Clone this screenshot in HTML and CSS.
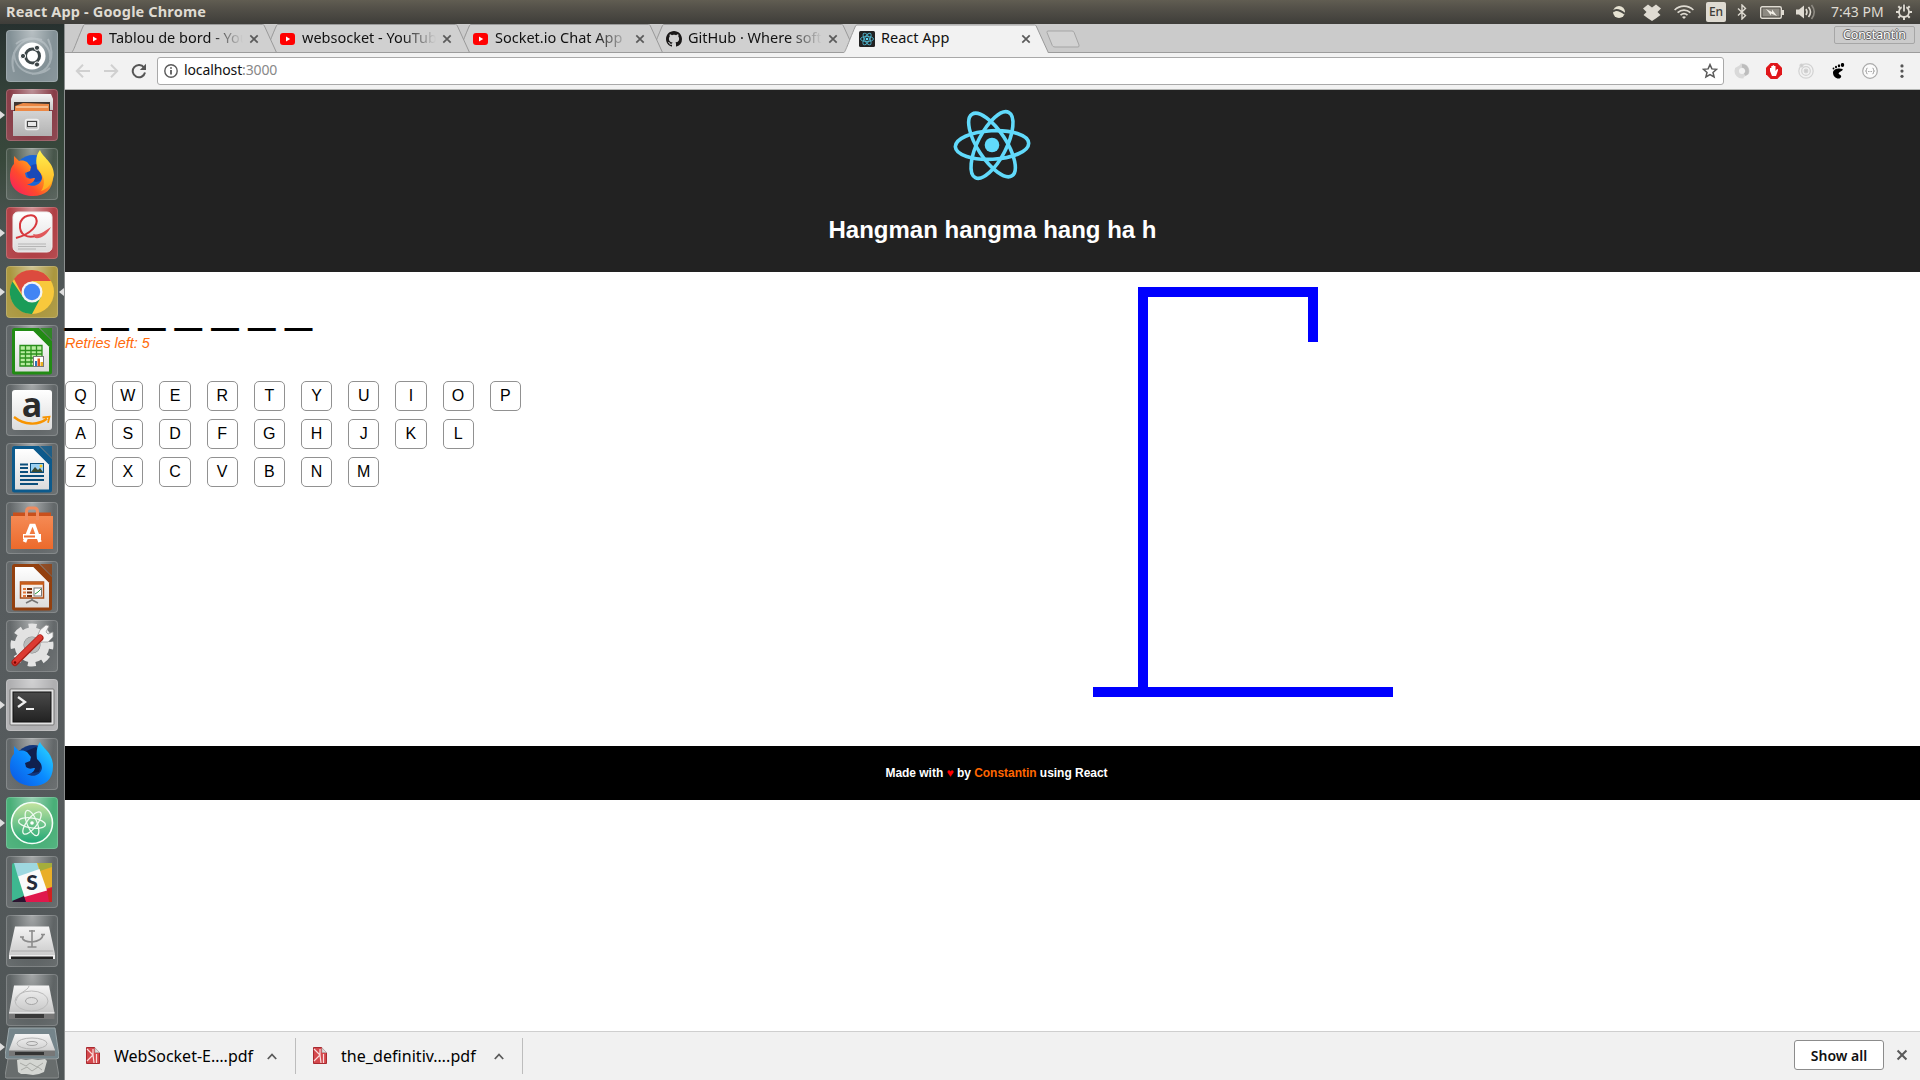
FILE: index.html
```html
<!DOCTYPE html>
<html lang="en">
<head>
<meta charset="utf-8">
<title>React App</title>
<link rel="stylesheet" href="styles.css">
</head>
<body>
<svg class="defs" width="0" height="0" aria-hidden="true">
  <defs>
    <linearGradient id="silver" x1="0" y1="0" x2="0" y2="1"><stop offset="0" stop-color="#f4f4f4"/><stop offset="1" stop-color="#c6c6c6"/></linearGradient>
    <linearGradient id="paper" x1="0" y1="0" x2="0" y2="1"><stop offset="0" stop-color="#fff"/><stop offset="1" stop-color="#dcdcdc"/></linearGradient>
    <linearGradient id="fox" x1="1" y1="0" x2="0" y2="1"><stop offset="0" stop-color="#fff44f"/><stop offset=".35" stop-color="#ffa81a"/><stop offset=".65" stop-color="#ff4a2c"/><stop offset="1" stop-color="#f5156c"/></linearGradient>
    <linearGradient id="bluefox" x1="1" y1="0" x2="0" y2="1"><stop offset="0" stop-color="#2fe0ff"/><stop offset=".5" stop-color="#0a8bff"/><stop offset="1" stop-color="#0b52e0"/></linearGradient>
    <linearGradient id="foxtail" x1="0" y1="0" x2="0" y2="1"><stop offset="0" stop-color="#fff250"/><stop offset="1" stop-color="#ffac1c"/></linearGradient>
    <linearGradient id="bag" x1="0" y1="0" x2="0" y2="1"><stop offset="0" stop-color="#f58a54"/><stop offset="1" stop-color="#ec6a2c"/></linearGradient>
    <linearGradient id="atomg" x1="0" y1="0" x2="0" y2="1"><stop offset="0" stop-color="#c5e4a0"/><stop offset="1" stop-color="#1ea675"/></linearGradient>
    <linearGradient id="screen" x1="0" y1="0" x2="0" y2="1"><stop offset="0" stop-color="#4a4a4a"/><stop offset="1" stop-color="#222"/></linearGradient>
    <symbol id="foxshape" viewBox="0 0 52 52"><path d="M4 29C4 21 6 18 8 16V8l5 5c3-1 6 0 8 1l4 5-1 4-5 2 1 4c4 3 6 1 9 1-1 4-4 6-8 6 6 4 14 1 15-6 0-4-3-7-5-9-1-7 0-13 3-17 2 6 13 10 13 24S39 48 27 48 4 41 4 29z"/></symbol>
    <symbol id="yt" viewBox="0 0 15 12"><rect width="15" height="12" rx="3" fill="#f00"/><path d="M6 3.500v5L10.200 6z" fill="#fff"/></symbol>
    <symbol id="close" viewBox="0 0 10 10"><path d="M1.300 1.300l7.400 7.400M8.700 1.300L1.300 8.700" stroke="#5a5a5a" stroke-width="1.700" fill="none"/></symbol>
    <symbol id="tabshape" viewBox="0 0 206 28"><path d="M.5 28.500C3 26.500 4 21 12.500 1.500 13 .8 13.300.5 14 .5H191.500c1 0 1.300.3 1.700 1L205.500 28.500"/></symbol>
    <symbol id="chev" viewBox="0 0 10 7"><path d="M.8 6L5 1.500 9.200 6" fill="none" stroke="#5a5a5a" stroke-width="1.800"/></symbol>
    <symbol id="pdf" viewBox="0 0 14 17"><path d="M.5.500h9l4 4v12H.5z" fill="#d4484c" stroke="#a82a30"/><path d="M8.500 0H14v6z" fill="#f1f1f1"/><path d="M9 1v4.500h4.500z" fill="#ddd" stroke="#aaa" stroke-width=".6"/><path d="M1 2l6 6-6 6M7 8V2M7 8l1 8M10.500 7v9" stroke="#f8dcdc" stroke-width="1.200" fill="none"/></symbol>
    <symbol id="office" viewBox="0 0 52 52"><path d="M9 3H33L46 16V47a2.500 2.500 0 0 1-2.500 2.500H8.500A2.500 2.500 0 0 1 6 47V5.500A2.500 2.500 0 0 1 9 3z"/><path d="M34 3h12v12z" opacity=".8"/><path d="M9 6H27.500L43 21.500V46.500H9z" fill="url(#paper)"/><path d="M27.500 6L43 21.500V18L31 6z" opacity=".8"/></symbol>
    <symbol id="disk" viewBox="0 0 52 52"><path d="M8 11.500H43L48.500 39H3z" fill="url(#silver)"/><path d="M3 39H48.500V45H3z" fill="#777"/><path d="M9 40H38V44H9z" fill="#383838"/><path d="M3 39H48.500" stroke="#fff"/><ellipse cx="25.500" cy="27" rx="16.500" ry="10" fill="none" stroke="#bbb"/><ellipse cx="25.500" cy="27" rx="6" ry="3.500" fill="#ddd" stroke="#a4a4a4"/><path d="M23 12c-1 5-11 6-13 15" stroke="#bbb" fill="none"/></symbol>
  </defs>
</svg>

<header class="panel">
  <div class="panel-title">React App - Google Chrome</div>
  <div class="tray">
    <svg class="t-app" viewBox="0 0 14 14"><circle cx="7" cy="7" r="6" fill="#e6e2d2"/><path d="M1 6.500C4 3.500 8 5 12.800 8.800" stroke="#4a4944" stroke-width="2" fill="none"/></svg>
    <svg class="t-drop" viewBox="0 0 18 17"><path d="M5 .5L9 3.500 13 .5l5 4-3.500 3.500 3 3-4 3-4.500 3-4.500-3-4-3 3-3L0 4.500z" fill="#dfdbd2"/></svg>
    <svg class="t-wifi" viewBox="0 0 20 14" fill="none" stroke="#dfdbd2" stroke-width="1.600"><path d="M.6 5C6-.2 14-.2 19.400 5M3.600 7.700c3.800-3.500 9-3.500 12.800 0M6.500 10.200c2.200-2 4.800-2 7 0"/><path d="M8 12l2 2 2-2q-2-1.500-4 0z" fill="#dfdbd2" stroke="none"/></svg>
    <span class="lang">En</span>
    <svg class="t-bt" viewBox="0 0 10 16"><path d="M1 4.500l7.500 7L5 15V1l3.500 3.500L1 11.500" stroke="#dfdbd2" stroke-width="1.400" fill="none"/></svg>
    <svg class="t-bat" viewBox="0 0 24 13"><rect x=".7" y=".7" width="20.600" height="11.600" rx="1.500" fill="none" stroke="#dfdbd2" stroke-width="1.400"/><rect x="2.500" y="2.500" width="17" height="8" fill="#8d8a82"/><path d="M22 4h2v5h-2z" fill="#dfdbd2"/><path d="M6 3l6 3V3.500l5 6.500-6-2.500v2z" fill="#f0ede5"/></svg>
    <svg class="t-vol" viewBox="0 0 20 16"><path d="M0 5.500h3l5-4v13l-5-4H0z" fill="#dfdbd2"/><path d="M10 5q2 3 0 6M12.500 3q4 5 0 10" stroke="#dfdbd2" stroke-width="1.600" fill="none"/><path d="M15.500 1q5.500 7 0 14" stroke="#8d8a82" stroke-width="1.600" fill="none"/></svg>
    <span class="clock">7:43 PM</span>
    <svg class="t-gear" viewBox="0 0 16 16"><circle cx="8" cy="8" r="5" fill="none" stroke="#dfdbd2" stroke-width="1.800"/><path d="M8 13v3M0 8h3M13 8h3M2.300 2.300l2 2M13.700 2.300l-2 2M2.300 13.700l2-2M13.700 13.700l-2-2" stroke="#dfdbd2" stroke-width="2"/><path d="M8 0v8" stroke="#4a4944" stroke-width="4.400"/><path d="M8 .5v7" stroke="#dfdbd2" stroke-width="1.800"/></svg>
  </div>
</header>

<div class="desktop">
<nav class="launcher">
  <div class="tile ubuntu"><svg viewBox="0 0 52 52"><g fill="none" stroke="#c8d0d3" stroke-width="2" opacity=".5"><path d="M8 42C2 22 16 4 36 10M42 9c8 18 2 34-16 35M10 14C24 2 46 10 44 30M44 38C30 50 8 42 8 22"/></g><circle cx="26" cy="26" r="13.500" fill="#fff"/><circle cx="26.500" cy="26" r="7" fill="none" stroke="#3d4648" stroke-width="3"/><g stroke="#fff" fill="#3d4648"><circle cx="17" cy="26" r="2.600"/><circle cx="31" cy="17.800" r="2.600"/><circle cx="31" cy="34.500" r="2.600"/></g></svg></div>
  <div class="tile files run"><svg viewBox="0 0 52 52"><path d="M7 5h38l2 5v11H5V10z" fill="url(#silver)"/><path d="M8 13h36v10H8z" fill="#403631"/><path d="M9 17l8-3 26 1v7H9z" fill="#ec8845"/><path d="M10 18h32" stroke="#fff2d8"/><path d="M7 22H46V47H7z" fill="url(#silver)"/><path d="M7 22H46V47H7z" fill="#888" opacity=".3"/><rect x="19.500" y="30.500" width="13" height="10" rx="2" fill="none" stroke="#eee" stroke-width="1.500"/><rect x="21.500" y="32.500" width="9" height="5" fill="#e8e8e8" stroke="#444"/></svg></div>
  <div class="tile"><svg viewBox="0 0 52 52"><circle cx="27" cy="26" r="19" fill="#1a66d8"/><circle cx="30" cy="25" r="9" fill="#1949b8"/><use href="#foxshape" fill="url(#fox)"/><path d="M34 2c2 7 14 12 14 25-2 10-7 14-13 16 5-7 3-14-1-19-5-7-5-16 0-22z" fill="url(#foxtail)"/></svg></div>
  <div class="tile reader run"><svg viewBox="0 0 52 52"><rect x="7" y="5" width="39" height="40" rx="5" fill="url(#paper)" stroke="#eee"/><path d="M10 31C25 27 33 18 30 11c-3-5-14-3-16 6-1 12 8 14 16 12" fill="none" stroke="#d8383d" stroke-width="2"/><path d="M27 27c6 2 12-3 18-7-4 8-10 12-16 11z" fill="#e0585a"/><path d="M12 37h28M12 39.500h28M12 42h18" stroke="#aaa" stroke-width=".8"/></svg></div>
  <div class="tile chrome run active"><svg viewBox="0 0 52 52"><circle cx="26" cy="26" r="22" fill="#f8c83c"/><path d="M6.500 15.500A22 22 0 0 0 26 48l9-17-9-5-9 5z" fill="#1b9c58"/><path d="M8 13L17 30l9-15h19Q38 4 26 4 14 4 8 13z" fill="#dc4b3e"/><circle cx="26" cy="26" r="10.500" fill="#f4f4f4"/><circle cx="26" cy="26" r="8.200" fill="#4285f4"/></svg></div>
  <div class="tile"><svg viewBox="0 0 52 52"><use href="#office" fill="#228b14"/><path d="M14 20.500H36V41H14z" fill="#b8eca0"/><path d="M14 20.500H36V41H14zM14 25.500h22M14 29h22M14 33h22M14 37h22M19.500 21v20M25 21v20M30.500 21v20" fill="none" stroke="#2a8f1c" stroke-width="1.300"/><rect x="27.500" y="31.500" width="10" height="10" fill="#fff" stroke="#777"/><path d="M29 36h2v5h-2z" fill="#2d73b8"/><path d="M31.500 33.500h2.500V41h-2.500z" fill="#e0571c"/><path d="M34.500 37H37v4h-2.500z" fill="#e8b020"/></svg></div>
  <div class="tile"><svg viewBox="0 0 52 52"><rect x="6" y="6" width="40" height="40" rx="3" fill="url(#paper)"/><text x="26" y="33" text-anchor="middle" class="amazon">a</text><path d="M8 33c10 8 24 9 33 1.500" fill="none" stroke="#f79400" stroke-width="2.400"/><path d="M36.500 33.500l7-.8-1.500 6" fill="none" stroke="#f79400" stroke-width="1.800"/></svg></div>
  <div class="tile"><svg viewBox="0 0 52 52"><use href="#office" fill="#0c5a8c"/><path d="M14 21.500h8M14 25h8M14 29h8M14 33h24M14 37h24M14 41h18" stroke="#0b4f7c" stroke-width="2"/><rect x="24.500" y="20.500" width="13" height="9" fill="#9bd0f2" stroke="#0b4f7c"/><path d="M25 29l4-5 3 3 2-2 3 4z" fill="#3c4a30"/><circle cx="35" cy="23" r="1.500" fill="#f8c820"/></svg></div>
  <div class="tile"><svg viewBox="0 0 52 52"><path d="M7 10.500h38v4H7z" fill="#c9501c"/><path d="M5 14H47V47H5z" fill="url(#bag)"/><path d="M20.500 18V10q0-4 3-4h5q3 0 3 4v8" fill="none" stroke="#f08c60" stroke-width="3"/><path d="M18.500 40L25 23.500h3L34 40" fill="none" stroke="#fff" stroke-width="3.600"/><path d="M17 34.500h18" stroke="#fff" stroke-width="5"/><path d="M18 34.500h11" stroke="#ef7136" stroke-width="2"/></svg></div>
  <div class="tile"><svg viewBox="0 0 52 52"><use href="#office" fill="#93400f"/><rect x="14.500" y="21" width="23" height="16" fill="#f6eee8" stroke="#a84a14" stroke-width="1.500"/><path d="M14 22.500h24" stroke="#c85c18" stroke-width="2.500"/><path d="M17 28h3M17 31.500h3M17 35h3" stroke="#e0763a" stroke-width="2"/><path d="M21 28h5M21 31.500h5M21 35h5" stroke="#703010" stroke-width="2"/><rect x="28" y="27" width="7.500" height="8" fill="#fff" stroke="#777"/><path d="M29 33l3-2 3-3" stroke="#2a9c3c" fill="none"/><path d="M26 37v3M20 42l6-3 6 3" stroke="#777" stroke-width="1.600" fill="none"/></svg></div>
  <div class="tile"><svg viewBox="0 0 52 52"><circle cx="26" cy="25" r="19" fill="none" stroke="#e4e4e4" stroke-width="5" stroke-dasharray="8 6.920" stroke-dashoffset="4"/><circle cx="26" cy="25" r="13" fill="none" stroke="#e2e2e2" stroke-width="9"/><circle cx="26" cy="25" r="8" fill="#b9bbbb"/><path d="M31 17l3-7 6-5 3 1-3 6 2 2 5-2 0 5-5 5-6 0-3 2z" fill="#f4f4f4" stroke="#999" stroke-width=".8"/><path d="M34 18L9 42.500" stroke="#a82018" stroke-width="7" stroke-linecap="round"/><path d="M34 17.500L9 42" stroke="#dc3a32" stroke-width="5" stroke-linecap="round"/><circle cx="9" cy="42.500" r="1.300" fill="#700"/></svg></div>
  <div class="tile terminal run"><svg viewBox="0 0 52 52"><rect x="4" y="10" width="44" height="36" rx="1" fill="#e2e2e2" stroke="#777"/><rect x="7" y="13" width="38" height="30" fill="url(#screen)" stroke="#111"/><path d="M12 18l7 5-7 5" stroke="#eee" stroke-width="2.300" fill="none"/><path d="M20 30h8" stroke="#eee" stroke-width="2"/></svg></div>
  <div class="tile"><svg viewBox="0 0 52 52"><circle cx="27" cy="26" r="19" fill="#12367c"/><path d="M18 14l12-5 8 10-5 15-13 2z" fill="#10204e"/><use href="#foxshape" fill="url(#bluefox)"/></svg></div>
  <div class="tile atom run"><svg viewBox="0 0 52 52"><circle cx="26" cy="26" r="20.500" fill="url(#atomg)" stroke="#f4fff8" stroke-width="1.600"/><g fill="none" stroke="#eefaf0" stroke-width="1.300"><ellipse cx="26" cy="26" rx="13.500" ry="5" transform="rotate(8 26 26)"/><ellipse cx="26" cy="26" rx="13.500" ry="5" transform="rotate(68 26 26)"/><ellipse cx="26" cy="26" rx="13.500" ry="5" transform="rotate(128 26 26)"/></g><circle cx="26" cy="26" r="1.800" fill="#fff"/></svg></div>
  <div class="tile"><svg viewBox="0 0 52 52"><rect x="6" y="7" width="40" height="39" rx="2" fill="#3eb890"/><path d="M8 7H32L35 16 12 21z" fill="#9ed8e0"/><path d="M31 7H46V32L40 35z" fill="#e9ae28"/><path d="M32 7h14v4l-12 4z" fill="#a4ad3c"/><path d="M17 40l29-9v15H19z" fill="#e0184c"/><path d="M41 34l5-2v14h-3z" fill="#d02020"/><path d="M6 45l12-5 2 6H7z" fill="#2c1430"/><path d="M12 20.500L33.500 13 41 34.500 18.500 41z" fill="#fafafa"/><text x="26" y="34" text-anchor="middle" class="slack">S</text></svg></div>
  <div class="tile"><svg viewBox="0 0 52 52"><path d="M9 11.500H43L49 39v5H3v-5z" fill="url(#silver)"/><path d="M3 40h46v4H3z" fill="#eee"/><path d="M5 41.500h42v2.500H5z" fill="#222"/><path d="M5 36h42" stroke="#aaa"/><g fill="none" stroke="#8c8c8c" stroke-width="1.600"><path d="M26 15v17M16 22q1 5 10 5 10-1 11-7M21.500 32h9M23 16h6M14 22h4M35 19.500h4"/></g></svg></div>
  <div class="tile"><svg viewBox="0 0 52 52"><use href="#disk"/></svg></div>
  <div class="folded run"><svg viewBox="0 0 54 52"><path d="M4 1h46l4 28q0 3-3 3H3q-3 0-3-3z" fill="#75858b" stroke="#9ba7aa"/><path d="M10 7H44L50 23v5H4v-5z" fill="url(#silver)"/><path d="M4 23.500h46V29H4z" fill="#777"/><path d="M10 25h29v3H10z" fill="#333"/><ellipse cx="27" cy="16.500" rx="15" ry="5.500" fill="none" stroke="#b4b4b4"/><ellipse cx="27" cy="16.500" rx="5.500" ry="2" fill="none" stroke="#a0a0a0"/><path d="M3 32H51L54 49q0 2-2 2H2q-2 0-2-2z" fill="#686d6d" stroke="#8a8e8e"/><path d="M12 33l4-1 5 1 6-1 6 1 7-1 2 2-3 11-5 2-6 1-7-1-5 0-3-2z" fill="#d4d6d2"/><path d="M15 36l6 3 4-3 7 4 6-4M16 43l6-3 5 4 6-4 4 3" stroke="#a8aaa6" fill="none"/></svg></div>
</nav>

<div class="browser">
  <div class="tabstrip">
    <div class="tab"><svg class="shape"><use href="#tabshape"/></svg><svg class="fav yt"><use href="#yt"/></svg><span class="label fade">Tablou de bord - YouTube</span><svg class="x"><use href="#close"/></svg></div>
    <div class="tab"><svg class="shape"><use href="#tabshape"/></svg><svg class="fav yt"><use href="#yt"/></svg><span class="label fade">websocket - YouTube</span><svg class="x"><use href="#close"/></svg></div>
    <div class="tab"><svg class="shape"><use href="#tabshape"/></svg><svg class="fav yt"><use href="#yt"/></svg><span class="label fade">Socket.io Chat App</span><svg class="x"><use href="#close"/></svg></div>
    <div class="tab"><svg class="shape"><use href="#tabshape"/></svg><svg class="fav" viewBox="0 0 16 16"><path fill="#191717" d="M8 0C3.580 0 0 3.580 0 8c0 3.540 2.290 6.530 5.470 7.590.4.070.55-.17.55-.38 0-.19-.01-.82-.01-1.490-2.010.37-2.530-.49-2.690-.94-.09-.23-.48-.94-.82-1.130-.28-.15-.68-.52-.01-.53.63-.01 1.080.58 1.230.82.72 1.210 1.870.87 2.330.66.070-.52.28-.87.51-1.070-1.780-.2-3.640-.89-3.640-3.950 0-.87.31-1.590.82-2.150-.08-.2-.36-1.020.08-2.120 0 0 .67-.21 2.200.82.64-.18 1.320-.27 2-.27s1.360.09 2 .27c1.530-1.040 2.200-.82 2.200-.82.44 1.100.16 1.920.08 2.120.51.56.82 1.270.82 2.150 0 3.070-1.870 3.750-3.650 3.950.29.25.54.73.54 1.480 0 1.070-.01 1.930-.01 2.200 0 .21.15.46.55.38A8.010 8.010 0 0 0 16 8c0-4.420-3.580-8-8-8z"/></svg><span class="label fade">GitHub · Where software</span><svg class="x"><use href="#close"/></svg></div>
    <div class="tab selected"><svg class="shape"><use href="#tabshape"/></svg><svg class="fav" viewBox="0 0 16 16"><rect width="16" height="16" rx="1.500" fill="#222"/><g fill="none" stroke="#4fb4cc" stroke-width=".9"><ellipse cx="8" cy="8" rx="6.500" ry="2.600"/><ellipse cx="8" cy="8" rx="6.500" ry="2.600" transform="rotate(60 8 8)"/><ellipse cx="8" cy="8" rx="6.500" ry="2.600" transform="rotate(120 8 8)"/></g><circle cx="8" cy="8" r="1.300" fill="#61dafb"/></svg><span class="label">React App</span><svg class="x"><use href="#close"/></svg></div>
    <svg class="newtab" viewBox="0 0 34 18"><path d="M2 1H26q1.500 0 2 1.200L33 15q.5 2-1 2H9q-2 0-2.700-1.500L1 2.500Q.7 1 2 1z" fill="#d2d2d2" stroke="#a5a5a5"/></svg>
    <div class="profile">Constantin</div>
  </div>

  <div class="toolbar">
    <svg class="nav" viewBox="0 0 16 16"><path d="M15 8H2M8 1.800L1.800 8 8 14.200" fill="none" stroke="#d0d0d0" stroke-width="2"/></svg>
    <svg class="nav" viewBox="0 0 16 16"><path d="M1 8h13M8 1.800L14.200 8 8 14.200" fill="none" stroke="#d0d0d0" stroke-width="2"/></svg>
    <svg class="nav" viewBox="0 0 16 16"><path d="M13 4.500A6.200 6.200 0 1 0 14 9.500" fill="none" stroke="#555" stroke-width="2"/><path d="M15 .8v6.200H8.800z" fill="#555"/></svg>
    <div class="omnibox">
      <svg class="info" viewBox="0 0 14 14"><circle cx="7" cy="7" r="6.200" fill="none" stroke="#5a5a5a" stroke-width="1.400"/><path d="M7 6v4.500M7 3.200v1.600" stroke="#5a5a5a" stroke-width="1.800"/></svg>
      <span class="url">localhost<span class="port">:3000</span></span>
      <svg class="star" viewBox="0 0 16 16"><path d="M8 1.600l1.900 4.300 4.700.4-3.600 3.100 1.100 4.600L8 11.600 3.900 14 5 9.400 1.400 6.300l4.700-.4z" fill="none" stroke="#5a5a5a" stroke-width="1.500"/></svg>
    </div>
    <div class="exts">
      <svg viewBox="0 0 16 16"><circle cx="8" cy="8" r="5.300" fill="none" stroke="#d9d9d9" stroke-width="4.500"/><path d="M8 2.700a5.300 5.300 0 0 1 3 9.500" stroke="#bdbdbd" stroke-width="3.500" fill="none"/><path d="M1 4l5-3M10 15l5-3" stroke="#f2f2f2" stroke-width="2"/></svg>
      <svg viewBox="0 0 16 16"><path d="M4.700 0h6.600L16 4.700v6.600L11.300 16H4.700L0 11.300V4.700z" fill="#e0161a"/><path d="M4 8V5h1.300V3h1.400V2.200h1.400V3h1.400v5l1.500-2q1.500 0 1 1.200L10 13H6z" fill="#fff"/></svg>
      <svg viewBox="0 0 16 16" fill="none" stroke="#d2d2d2" stroke-width="1.200"><circle cx="8" cy="8" r="7.200"/><circle cx="8" cy="8" r="4.300"/><circle cx="8" cy="8" r="1.800" fill="#ccc"/><circle cx="3.500" cy="2.500" r="1.500" fill="#ccc"/></svg>
      <svg viewBox="0 0 16 16"><path d="M12.500 6C9 4.500 3 6 3 9.500 3 13 5.500 15.500 8.500 15.500s3.500-3 1.500-3.800C8.500 11 8 10 9.500 9.200S13.500 7 12.500 6z"/><ellipse cx="12.500" cy="2" rx="1.700" ry="2.100"/><ellipse cx="9" cy="2.700" rx="1.200" ry="1.500"/><ellipse cx="6" cy="4" rx="1" ry="1.300"/><ellipse cx="3.500" cy="5.500" rx=".9" ry="1.100"/></svg>
      <svg viewBox="0 0 16 16"><circle cx="8" cy="8" r="7.300" fill="#fbfbfb" stroke="#aaa" stroke-width="1.200"/><path d="M5.500 5.200q-1.200 0-1 1.300T3.500 8q1.200.2 1 1.500t1 1.300M10.500 5.200q1.200 0 1 1.300t1 1.500q-1.200.2-1 1.500t-1 1.300" stroke="#999" fill="none"/><path d="M6.200 8.500h3.600" stroke="#999" stroke-dasharray=".9 .450"/></svg>
      <svg viewBox="0 0 16 16" fill="#555"><circle cx="8" cy="2.900" r="1.600"/><circle cx="8" cy="8.100" r="1.600"/><circle cx="8" cy="13.300" r="1.600"/></svg>
    </div>
  </div>

  <main class="page">
    <section class="app-header">
      <svg class="logo" viewBox="-40 -40 80 80"><g transform="rotate(-3)" fill="none" stroke="#61dafb" stroke-width="3.600"><ellipse rx="36.700" ry="14.300"/><ellipse rx="36.700" ry="14.300" transform="rotate(60)"/><ellipse rx="36.700" ry="14.300" transform="rotate(120)"/></g><circle r="7.300" fill="#61dafb"/></svg>
      <h1>Hangman hangma hang ha h</h1>
    </section>
    <section class="game">
      <div class="play">
        <div class="word">_______</div>
        <div class="retries">Retries left: 5</div>
        <div class="keys">
          <div class="row"><button>Q</button><button>W</button><button>E</button><button>R</button><button>T</button><button>Y</button><button>U</button><button>I</button><button>O</button><button>P</button></div>
          <div class="row"><button>A</button><button>S</button><button>D</button><button>F</button><button>G</button><button>H</button><button>J</button><button>K</button><button>L</button></div>
          <div class="row"><button>Z</button><button>X</button><button>C</button><button>V</button><button>B</button><button>N</button><button>M</button></div>
        </div>
      </div>
      <svg class="gallows" viewBox="0 0 300 410" fill="#00f"><path d="M45 0H225V55H215V10H55V400H300V410H0V400H45z"/></svg>
    </section>
    <footer class="credits">Made with <span class="heart">♥</span> by <span class="author">Constantin</span> using React</footer>
  </main>

  <div class="downloads">
    <div class="dl first"><svg class="pdf"><use href="#pdf"/></svg><span>WebSocket-E….pdf</span><svg class="chev"><use href="#chev"/></svg></div>
    <div class="dl second"><svg class="pdf"><use href="#pdf"/></svg><span>the_definitiv….pdf</span><svg class="chev"><use href="#chev"/></svg></div>
    <button class="showall">Show all</button>
    <svg class="dismiss"><use href="#close"/></svg>
  </div>
</div>
</div>
</body>
</html>
```
FILE: styles.css
```css
* { box-sizing: border-box; }
html, body { margin: 0; height: 100%; overflow: hidden; }
body { display: flex; flex-direction: column; background: #fff; font-family: "Noto Sans", sans-serif; }
svg { display: block; flex: none; }
.defs { position: absolute; }

/* top panel */
.panel { flex: none; height: 24px; display: flex; align-items: center; justify-content: space-between; background: linear-gradient(#615d52, #55524a 30%, #3e3d39); color: #dfdbd2; padding: 0 8px 0 6px; }
.panel-title { font-size: 14.5px; font-weight: 700; letter-spacing: .15px; line-height: 22px; height: 24px; }
.tray { display: flex; align-items: center; }
.t-app { width: 14px; height: 14px; margin-right: 17px; }
.t-drop { width: 18px; height: 17px; margin-right: 13px; }
.t-wifi { width: 20px; height: 14px; margin-right: 12px; }
.lang { width: 20px; height: 20px; border-radius: 2px; background: #dfdbd2; color: #3e3d39; font-size: 12px; font-weight: 500; line-height: 20px; text-align: center; margin-right: 11px; }
.t-bt { width: 10px; height: 16px; margin-right: 13px; }
.t-bat { width: 24px; height: 13px; margin-right: 12px; }
.t-vol { width: 20px; height: 16px; margin-right: 15px; }
.clock { width: 53px; font-size: 14px; line-height: 24px; white-space: nowrap; margin-right: 12px; }
.t-gear { width: 16px; height: 16px; }

.desktop { flex: 1; display: flex; min-height: 0; }

/* launcher */
.launcher { flex: none; width: 65px; padding: 6px 0 0 6px; display: flex; flex-direction: column; gap: 7px; border-right: 1px solid #8b8e8e; background: linear-gradient(#27312f, #34423a 7%, #38483b 13%, #4a5350 19%, #53595b 28%, #575c5e 60%, #4f5556 100%); }
.tile { position: relative; flex: none; width: 52px; height: 52px; border-radius: 4px; background: radial-gradient(ellipse at 50% 0, rgba(255,255,255,.48), rgba(255,255,255,.08) 60%, rgba(255,255,255,.14)); box-shadow: inset 0 0 0 1px rgba(255,255,255,.18); }
.tile svg { width: 52px; height: 52px; }
.tile.ubuntu { background-color: #78878d; }
.tile.files { background-color: #7e2d38; }
.tile.reader { background-color: #a92f35; }
.tile.chrome { background-color: #a38e2e; }
.tile.terminal { background-color: #a8a8aa; }
.tile.atom { background-color: #39a86c; }
.run::before { content: ""; position: absolute; left: -6px; top: 22px; border: 4.500px solid transparent; border-left: 5px solid #dedede; border-right: 0; }
.active::after { content: ""; position: absolute; right: -6px; top: 22px; border: 4.500px solid transparent; border-right: 5px solid #dedede; border-left: 0; }
.folded { position: relative; flex: none; width: 54px; height: 52px; margin: -6px 0 0 -1px; }
.folded svg { width: 54px; height: 52px; }
.folded::before { left: -5px; top: 16px; }
.amazon { font: 700 34px "Open Sans", sans-serif; fill: #2b2b2b; }
.slack { font: 900 21px Lato, sans-serif; fill: #252a38; }

/* browser chrome */
.browser { flex: 1; min-width: 0; display: flex; flex-direction: column; background: #fff; }
.tabstrip { position: relative; flex: none; height: 29px; padding-left: 6px; display: flex; align-items: flex-start; background: #cbcbcb; border-bottom: 1px solid #9c9c9c; }
.tab { position: relative; width: 206px; height: 29px; margin-right: -13px; padding: 0 18px 0 17px; display: flex; align-items: center; }
.tab:nth-child(1) { z-index: 4; }
.tab:nth-child(2) { z-index: 3; }
.tab:nth-child(3) { z-index: 2; }
.tab:nth-child(4) { z-index: 1; }
.tab.selected { z-index: 5; }
.shape { position: absolute; left: 0; top: 0; width: 206px; height: 29px; z-index: -1; fill: #d0d0d0; stroke: #999; }
.tab:not(.selected) .shape { height: 28px; }
.selected .shape { fill: #f2f2f2; }
.fav { width: 16px; height: 16px; margin: 0 6px 0 -1px; }
.fav.yt { width: 15px; height: 12px; margin: 0 7px 0 -1px; }
.label { width: 134px; height: 29px; font-size: 14.500px; line-height: 27px; color: #111; white-space: nowrap; overflow: hidden; }
.fade { -webkit-mask-image: linear-gradient(90deg, #000 75%, transparent); mask-image: linear-gradient(90deg, #000 75%, transparent); }
.x { width: 10px; height: 10px; margin-left: 6px; }
.newtab { width: 34px; height: 18px; margin: 6px 0 0 10px; }
.profile { margin: 2px 5px 0 auto; width: 81px; height: 18px; border: 1px solid #a6a6a6; border-radius: 2px; font-size: 12.300px; line-height: 16px; text-align: center; color: #fff; text-shadow: 1px 0 #666, -1px 0 #666, 0 1px #666, 0 -1px #666; }

.toolbar { flex: none; height: 37px; display: flex; align-items: center; background: #f2f2f2; border-bottom: 1px solid #b4b6b4; padding: 0 10px; }
.nav { width: 16px; height: 16px; margin-right: 12px; }
.omnibox { flex: 1; height: 28px; margin-right: 10px; margin-left: -2px; padding: 0 5px 0 6px; display: flex; align-items: center; background: #fff; border: 1px solid #a9a9a9; border-radius: 3px; }
.info { width: 14px; height: 14px; margin-right: 6px; }
.url { flex: 1; font-size: 14px; letter-spacing: -.12px; line-height: 24px; height: 26px; color: #111; }
.port { color: #888; }
.star { width: 16px; height: 16px; }
.exts { display: flex; gap: 16px; }
.exts svg { width: 16px; height: 16px; }

/* app */
.page { flex: 1; min-height: 0; font-family: "Liberation Sans", Arial, sans-serif; }
.app-header { height: 182px; background: #222; display: flex; flex-direction: column; align-items: center; padding-top: 15px; color: #fff; }
.logo { width: 80px; height: 80px; margin-right: 1px; }
h1 { margin: 31px 0 0; font-size: 24px; line-height: 28px; }
.game { height: 474px; display: flex; }
.play { width: 1028px; padding-top: 8px; }
.word { height: 55px; font-size: 48px; line-height: 50px; letter-spacing: 10px; color: #000; }
.retries { font-size: 14.400px; line-height: 16px; font-style: italic; color: #ff6a0a; }
.keys { display: flex; flex-direction: column; gap: 8px; margin-top: 30px; }
.row { display: flex; gap: 16px; }
.row button { width: 31.200px; height: 30px; padding: 0; border: 1px solid #919191; border-radius: 5px; background: #fff; color: #000; font: 16px "Liberation Sans", Arial, sans-serif; }
.gallows { width: 300px; height: 410px; margin-top: 15px; }
.credits { height: 54px; padding-left: 8px; background: #000; color: #fff; font-size: 12px; font-weight: 700; letter-spacing: -.03px; line-height: 54px; text-align: center; }
.heart { color: #f00; }
.author { color: #f60; }

/* download shelf */
.downloads { flex: none; height: 49px; border-top: 1px solid #cfcfcf; background: #f1f1f1; display: flex; align-items: center; }
.dl { height: 36px; display: flex; align-items: center; border-right: 1px solid #bdbdbd; font-size: 16px; color: #000; white-space: nowrap; }
.dl.first { width: 231px; padding-left: 21px; }
.dl.second { width: 227px; padding-left: 17px; }
.pdf { width: 14px; height: 17px; margin: -2px 14px 0 0; }
.dl span { width: 139px; }
.second span { letter-spacing: .05px; }
.chev { width: 10px; height: 7px; margin-left: 14px; }
.showall { margin: -2px 0 0 auto; width: 90px; height: 30px; padding: 0; background: #fff; border: 1px solid #8c8c8c; border-radius: 3px; font: 600 14px "Noto Sans", sans-serif; color: #111; }
.dismiss { width: 12px; height: 12px; margin: -2px 12px 0 12px; }
```
